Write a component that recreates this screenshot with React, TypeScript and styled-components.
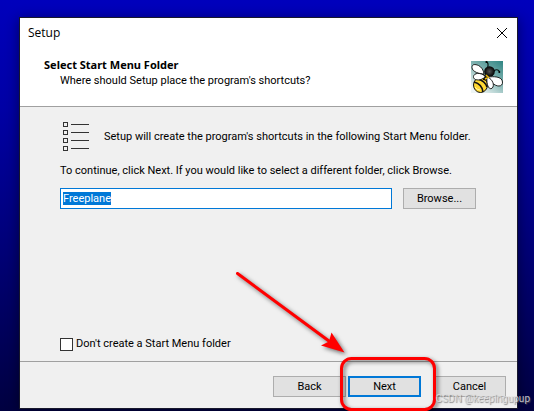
import React, { useEffect, useRef } from "react";
import styled, { createGlobalStyle } from "styled-components";

const GlobalStyle = createGlobalStyle`
  * { box-sizing: border-box; }
  html, body, #root { height: 100%; }
  body {
    margin: 0;
    overflow: hidden;
    color: #000;
    font-family: Roboto, "Liberation Sans", sans-serif;
    font-size: 11px;
    line-height: 16px;
  }
`;

const Desktop = styled.div`
  position: relative;
  display: flex;
  min-height: 100%;
  padding: 17px 16px 2px 19px;
  background: linear-gradient(#0000bc, #0000a4 27%, #000078 60%, #000040);
`;

const Dialog = styled.main`
  flex: 1;
  display: flex;
  flex-direction: column;
  border: 1px solid #18182c;
  background: #f0f0f0;
  box-shadow: 0 2px 12px rgba(0, 0, 0, 0.45);
`;

const Header = styled.header`
  background: #fff;
  border-bottom: 1px solid #a0a0a0;
`;

const TitleBar = styled.div`
  display: flex;
  align-items: center;
  justify-content: space-between;
  height: 30px;
  padding: 0 8px;
  font-family: "Open Sans", "Noto Sans", sans-serif;
  font-size: 12px;
`;

const CloseButton = styled.button`
  display: flex;
  align-items: center;
  justify-content: center;
  width: 14px;
  height: 14px;
  padding: 0;
  border: 0;
  background: none;
`;

const Banner = styled.div`
  display: flex;
  justify-content: space-between;
  padding: 9px 14px 13px 24px;
`;

const Heading = styled.h1`
  margin: 0;
  font-family: "Noto Sans", "Open Sans", sans-serif;
  font-size: 11px;
  font-weight: 700;
  line-height: 16px;
`;

const Subheading = styled.p`
  margin: 0;
  padding-left: 16px;
`;

const BannerIcon = styled.svg`
  margin-top: 4px;
`;

const Content = styled.section`
  flex: 1;
  display: flex;
  flex-direction: column;
  padding: 15px 41px 9px 40px;
`;

const Intro = styled.div`
  display: flex;
  align-items: center;
  gap: 14px;
  padding-left: 2px;
`;

const IntroText = styled.p`
  flex: 1;
  margin: 0;
`;

const Instruction = styled.label`
  margin-top: 11px;
`;

const FolderRow = styled.div`
  display: flex;
  gap: 11px;
  margin-top: 9px;
`;

const FolderInput = styled.input`
  flex: 1;
  min-width: 0;
  height: 21px;
  padding: 0 2px;
  border: 1px solid #0078d7;
  border-radius: 0;
  outline: none;
  background: #fff;
  color: #000;
  font: inherit;
  line-height: 13px;
  &::selection { background: #0078d7; color: #fff; }
`;

const PushButton = styled.button<{ $primary?: boolean }>`
  width: 73px;
  height: 21px;
  padding: 0;
  border: ${(p) => (p.$primary ? "2px solid #0078d7" : "1px solid #adadad")};
  background: #e1e1e1;
  color: #000;
  font: inherit;
  line-height: 16px;
`;

const CheckRow = styled.label`
  display: flex;
  align-items: center;
  gap: 3px;
  margin-top: auto;
`;

const CheckBox = styled.input`
  appearance: none;
  width: 13px;
  height: 13px;
  margin: 0;
  border: 1px solid #333;
  background: #fff;
`;

const Footer = styled.footer`
  display: flex;
  justify-content: flex-end;
  gap: 12px;
  padding: 14px 11px 11px;
  border-top: 1px solid #a0a0a0;
`;

const ButtonPair = styled.div`
  display: flex;
  gap: 2px;
`;

const Annotation = styled.svg`
  position: absolute;
  right: 90px;
  bottom: -6px;
  pointer-events: none;
  filter: drop-shadow(2px 2px 2px rgba(0, 0, 0, 0.55));
`;

const Watermark = styled.div`
  position: absolute;
  right: 4px;
  bottom: 4px;
  color: rgba(225, 225, 225, 0.85);
  font-size: 10px;
  text-shadow: 1px 1px 1px rgba(90, 90, 90, 0.7);
`;

function BeeIcon() {
  return (
    <BannerIcon width="32" height="32" viewBox="0 0 32 32" aria-hidden="true">
      <defs>
        <linearGradient id="beeBack" x1="1" y1="0" x2="0.3" y2="1">
          <stop offset="0" stopColor="#2f8583" />
          <stop offset="0.5" stopColor="#82b4b2" />
          <stop offset="1" stopColor="#eef5f5" />
        </linearGradient>
        <radialGradient id="beeHead">
          <stop offset="0" stopColor="#555" />
          <stop offset="1" stopColor="#000" />
        </radialGradient>
        <clipPath id="beeBody">
          <ellipse cx="9.5" cy="24" rx="7" ry="7.5" />
        </clipPath>
      </defs>
      <rect width="32" height="32" fill="url(#beeBack)" />
      <path d="M16.500 7c1-3 1-5-1-6.500M23 10c2-2 4-1.500 5.500.5" fill="none" stroke="#071515" strokeWidth="1.200" />
      <circle cx="15.400" cy="1" r="1" />
      <circle cx="28.300" cy="11" r="1" />
      <ellipse cx="9.500" cy="24" rx="7" ry="7.500" fill="#ffd932" />
      <g clipPath="url(#beeBody)" fill="none" stroke="#111" strokeWidth="1.700">
        <path d="M7 18q7 2 9 8M3 21q8 2 9 10" />
      </g>
      <ellipse cx="9.500" cy="24" rx="7" ry="7.500" fill="none" stroke="#111" />
      <path d="M4 26q2 3 5 3" fill="none" stroke="#fff3a0" />
      <path d="M12 13l7 3-2 4-5-1z" fill="#171200" />
      <circle cx="18.500" cy="10.500" r="5.300" fill="url(#beeHead)" />
      <g fill="#fff" stroke="#111" strokeWidth="0.900">
        <path d="M13 13C9 13 1 11 1 6.500 1 3 4 3 7.500 4.500 10.500 6 12.500 9 13 13z" />
        <path d="M14 15C9 11 3 12 2.500 15.500c-.5 4 7 5 11.500.5z" />
        <path d="M17 16c5-.5 14-1 14.500 5 .5 6-9 6-14.500-5z" />
        <path d="M16 16c4 1 7.500 6 6 10-2 4-7 1-6-10z" />
      </g>
      <path d="M15 14l3 3M14 18l2-1" stroke="#f0be10" strokeWidth="1.500" />
    </BannerIcon>
  );
}

function ListIcon() {
  return (
    <svg width="28" height="30" viewBox="0 0 28 30" fill="none" stroke="#333" aria-hidden="true">
      {[0, 8, 16, 24].map((y) => (
        <g key={y}>
          <rect x="1.500" y={y + 0.5} width="4" height="4" />
          <path d={`M9 ${y + 2.5}h18`} />
        </g>
      ))}
    </svg>
  );
}

export default function App() {
  const folder = useRef<HTMLInputElement>(null);
  useEffect(() => {
    folder.current?.focus();
    folder.current?.select();
  }, []);

  return (
    <>
      <GlobalStyle />
      <Desktop>
        <Dialog>
          <Header>
            <TitleBar>
              <span>Setup</span>
              <CloseButton aria-label="Close">
                <svg width="10" height="10" viewBox="0 0 10 10" stroke="#000" aria-hidden="true">
                  <path d="M0 0l10 10M10 0L0 10" />
                </svg>
              </CloseButton>
            </TitleBar>
            <Banner>
              <div>
                <Heading>Select Start Menu Folder</Heading>
                <Subheading>Where should Setup place the program's shortcuts?</Subheading>
              </div>
              <BeeIcon />
            </Banner>
          </Header>
          <Content>
            <Intro>
              <ListIcon />
              <IntroText>Setup will create the program's shortcuts in the following Start Menu folder.</IntroText>
            </Intro>
            <Instruction htmlFor="folder">
              To continue, click Next. If you would like to select a different folder, click Browse.
            </Instruction>
            <FolderRow>
              <FolderInput id="folder" ref={folder} defaultValue="Freeplane" spellCheck={false} />
              <PushButton>Browse...</PushButton>
            </FolderRow>
            <CheckRow>
              <CheckBox type="checkbox" />
              Don't create a Start Menu folder
            </CheckRow>
          </Content>
          <Footer>
            <ButtonPair>
              <PushButton>Back</PushButton>
              <PushButton $primary>Next</PushButton>
            </ButtonPair>
            <PushButton>Cancel</PushButton>
          </Footer>
        </Dialog>
        <Annotation width="214" height="152" viewBox="230 265 214 152" aria-hidden="true">
          <path d="M237.500 273.500L333 344" stroke="#f00" strokeWidth="3" strokeLinecap="round" />
          <path d="M344.500 352.500L321 345.500l8-4 2.500-9z" fill="#f00" />
          <rect x="341.500" y="358.500" width="93" height="51" rx="10" fill="none" stroke="#f00" strokeWidth="3" />
        </Annotation>
        <Watermark>CSDN @keepingupup</Watermark>
      </Desktop>
    </>
  );
}
